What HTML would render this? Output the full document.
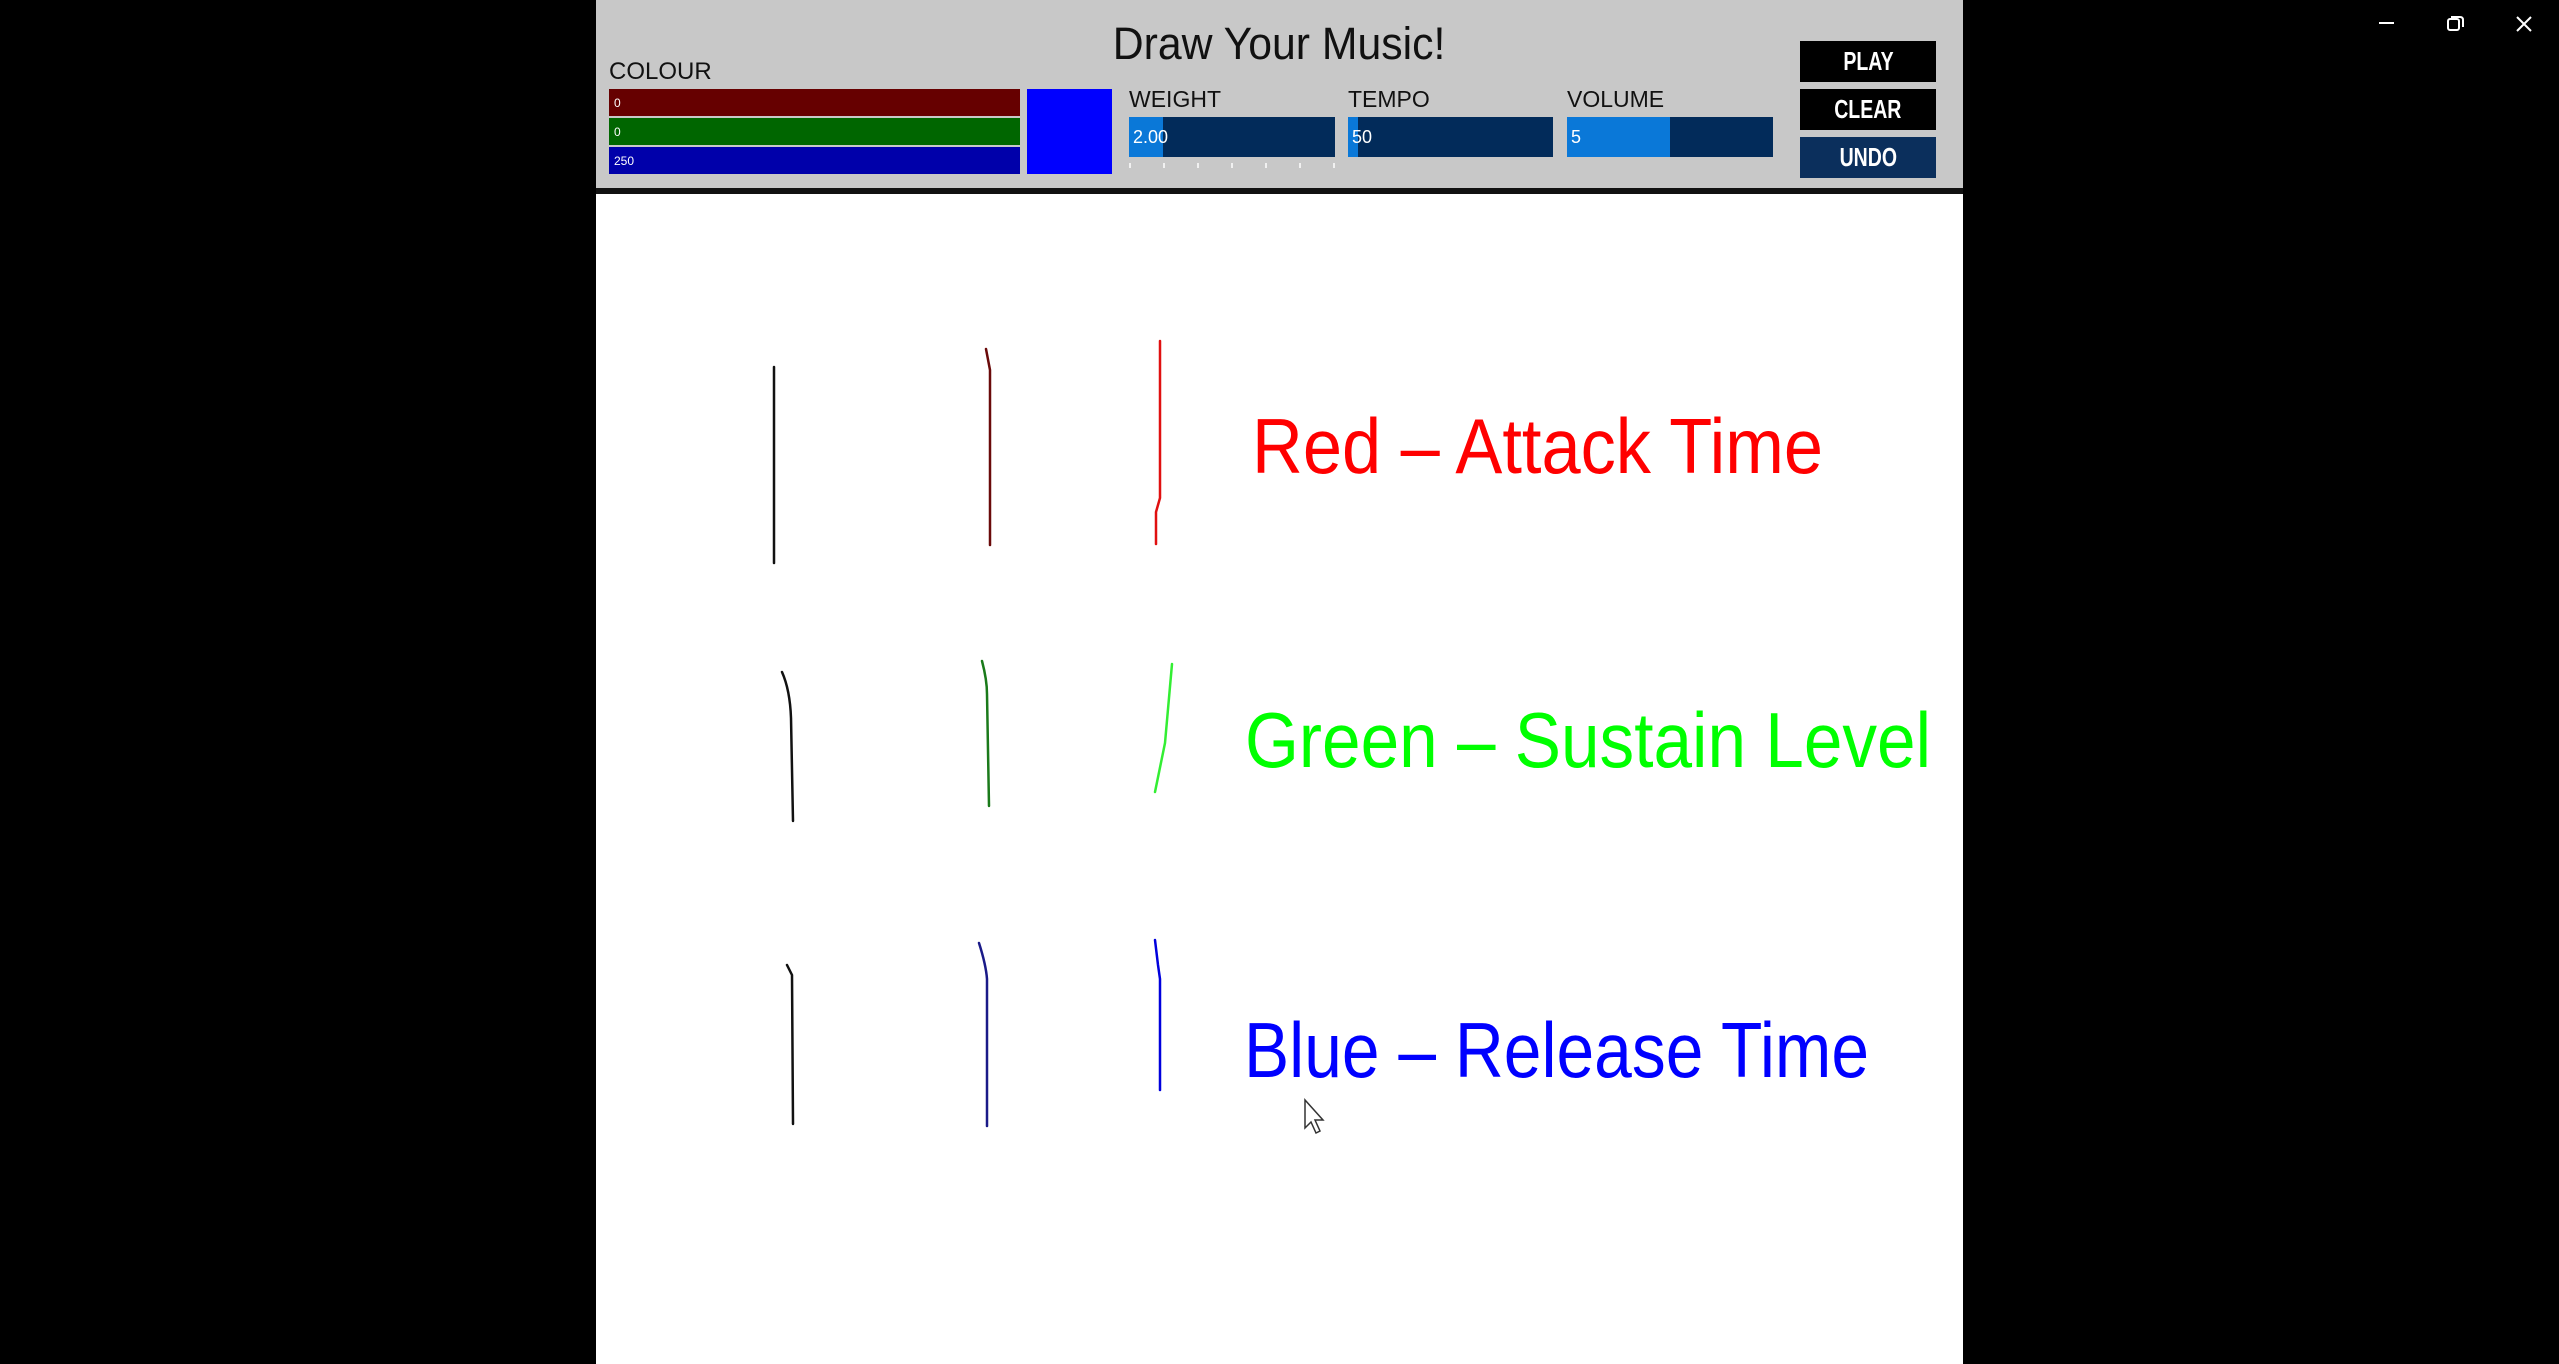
<!DOCTYPE html>
<html><head><meta charset="utf-8"><style>
html,body{margin:0;padding:0;background:#000;width:2559px;height:1364px;overflow:hidden;font-family:"Liberation Sans",sans-serif}
.a{position:absolute}
.b{position:absolute;left:1800px;width:136px;height:41px;color:#fff;font-size:26px;line-height:41px;text-align:center;font-family:"Liberation Sans",sans-serif;font-weight:bold}
.b span{display:inline-block;transform:scaleX(0.75)}
</style></head><body>
<div class="a" style="left:596px;top:0;width:1367px;height:1364px;background:#fff"></div>
<div class="a" style="left:596px;top:0;width:1367px;height:188px;background:#c8c8c8"></div>
<div class="a" style="left:596px;top:188px;width:1367px;height:6px;background:#111"></div>
<div class="a" style="left:596px;top:21px;width:1367px;text-align:center;font-size:45px;color:#111;line-height:46px"><span style="display:inline-block;transform:scaleX(0.95)">Draw Your Music!</span></div>
<div class="a" style="left:609px;top:58px;font-size:24px;color:#111">COLOUR</div>
<div class="a" style="left:609px;top:89px;width:411px;height:27px;background:#660000"></div>
<div class="a" style="left:609px;top:118px;width:411px;height:27px;background:#006600"></div>
<div class="a" style="left:609px;top:147px;width:411px;height:27px;background:#0000aa"></div>
<div class="a" style="left:614px;top:96px;font-size:12px;color:#fff">0</div>
<div class="a" style="left:614px;top:125px;font-size:12px;color:#fff">0</div>
<div class="a" style="left:614px;top:154px;font-size:12px;color:#fff">250</div>
<div class="a" style="left:1027px;top:89px;width:85px;height:85px;background:#0000ff"></div>

<div class="a" style="left:1129px;top:86px;font-size:23px;color:#111">WEIGHT</div>
<div class="a" style="left:1348px;top:86px;font-size:23px;color:#111">TEMPO</div>
<div class="a" style="left:1567px;top:86px;font-size:23px;color:#111">VOLUME</div>
<div class="a" style="left:1129px;top:117px;width:206px;height:40px;background:#022b5a"></div>
<div class="a" style="left:1129px;top:117px;width:34px;height:40px;background:#0a78d8"></div>
<div class="a" style="left:1348px;top:117px;width:205px;height:40px;background:#022b5a"></div>
<div class="a" style="left:1348px;top:117px;width:10px;height:40px;background:#0a78d8"></div>
<div class="a" style="left:1567px;top:117px;width:206px;height:40px;background:#022b5a"></div>
<div class="a" style="left:1567px;top:117px;width:103px;height:40px;background:#0a78d8"></div>
<div class="a" style="left:1133px;top:127px;font-size:18px;color:#fff">2.00</div>
<div class="a" style="left:1352px;top:127px;font-size:18px;color:#fff">50</div>
<div class="a" style="left:1571px;top:127px;font-size:18px;color:#fff">5</div>
<svg class="a" style="left:1125px;top:160px" width="220" height="12"><g stroke="#fff" stroke-width="1.5"><line x1="5" y1="3" x2="5" y2="8"/><line x1="39" y1="3" x2="39" y2="8"/><line x1="73" y1="3" x2="73" y2="8"/><line x1="107" y1="3" x2="107" y2="8"/><line x1="141" y1="3" x2="141" y2="8"/><line x1="175" y1="3" x2="175" y2="8"/><line x1="209" y1="3" x2="209" y2="8"/></g></svg>

<div class="b" style="top:41px;background:#000"><span>PLAY</span></div>
<div class="b" style="top:89px;background:#000"><span>CLEAR</span></div>
<div class="b" style="top:137px;background:#0b2f5c"><span>UNDO</span></div>

<svg class="a" style="left:0;top:0" width="2559" height="1364">
<g fill="none" stroke-width="2.5" stroke-linecap="round">
<path d="M774 367 L774 563" stroke="#111"/>
<path d="M986 349 L990 370 L990 545" stroke="#6a0a0a"/>
<path d="M1160 341 L1160 498 L1156 512 L1156 544" stroke="#e01010"/>
<path d="M782 672 Q790 690 791 718 L793 821" stroke="#111"/>
<path d="M982 661 Q987 680 987 694 L989 806" stroke="#1a7a1a"/>
<path d="M1172 664 L1165 743 L1155 792" stroke="#33ee33"/>
<path d="M787 965 L792 975 L793 1124" stroke="#111"/>
<path d="M979 943 Q986 965 987 979 L987 1126" stroke="#1a1a88"/>
<path d="M1155 940 L1158 965 L1160 979 L1160 1090" stroke="#0000dd"/>
</g>
<g font-family="Liberation Sans, sans-serif" font-size="78">
<text x="1252" y="473" textLength="571" lengthAdjust="spacingAndGlyphs" fill="#ff0000">Red – Attack Time</text>
<text x="1245" y="767" textLength="686" lengthAdjust="spacingAndGlyphs" fill="#00ff00">Green – Sustain Level</text>
<text x="1244" y="1077" textLength="625" lengthAdjust="spacingAndGlyphs" fill="#0000ff">Blue – Release Time</text>
</g>
<path d="M1305 1100 L1305 1128 L1311 1122 L1316 1133 L1320 1131 L1315 1120 L1323 1120 Z" fill="#fff" stroke="#333" stroke-width="1.5"/>
<g stroke="#fff" stroke-width="2" fill="none">
<line x1="2379" y1="23" x2="2394" y2="23"/>
<rect x="2448" y="19" width="11" height="11" rx="2"/>
<path d="M2451 17 L2460 17 Q2463 17 2463 20 L2463 27"/>
<path d="M2517 17 L2531 31 M2531 17 L2517 31"/>
</g>
</svg>
</body></html>
